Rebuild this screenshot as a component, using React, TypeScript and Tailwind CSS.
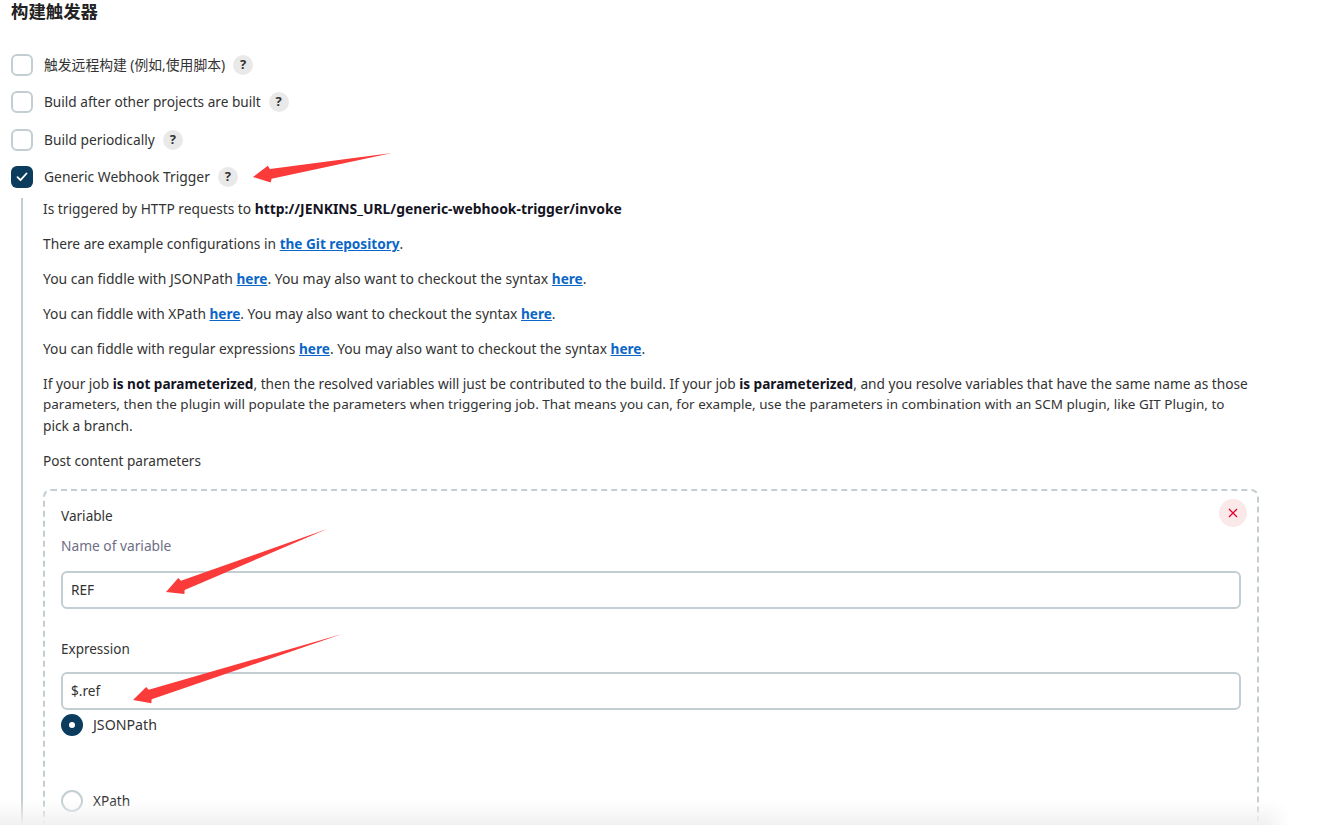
import React from "react";

const font = { fontFamily: '"Noto Sans", "Noto Sans CJK SC", sans-serif' };

function Help() {
  return (
    <span className="flex h-5 w-5 items-center justify-center rounded-full bg-[#e9e9e9] text-[13px] font-bold text-[#333]">?</span>
  );
}

function Box({ checked = false }: { checked?: boolean }) {
  return checked ? (
    <span className="flex h-[22px] w-[22px] items-center justify-center rounded-[6px] bg-[#0b3c5d]">
      <svg width="12" height="10" viewBox="0 0 12 10" fill="none">
        <path d="M1.5 5.2 4.5 8.2 10.5 1.5" stroke="#fff" strokeWidth="1.8" strokeLinecap="round" strokeLinejoin="round" />
      </svg>
    </span>
  ) : (
    <span className="block h-[22px] w-[22px] rounded-[6px] border-2 border-[#c3ced2] bg-white" />
  );
}

function Row({ label, checked, className = "", labelClass = "" }: { label: string; checked?: boolean; className?: string; labelClass?: string }) {
  return (
    <div className={`flex h-[22px] items-center ${className}`}>
      <Box checked={checked} />
      <span className={`ml-[11px] mr-[8px] leading-[22px] text-[#333] ${labelClass}`}>{label}</span>
      <Help />
    </div>
  );
}

function A({ children }: { children: React.ReactNode }) {
  return <a className="text-[13.6px] font-bold text-[#0b66c8] underline">{children}</a>;
}

function B({ children }: { children: React.ReactNode }) {
  return <b className="text-[13.6px] font-bold text-[#14141f]">{children}</b>;
}

function Arrow({ x1, y1, x2, y2 }: { x1: number; y1: number; x2: number; y2: number }) {
  // tapered arrow from a hair-thin tail (x1,y1) to the head tip (x2,y2)
  const dx = x2 - x1;
  const dy = y2 - y1;
  const len = Math.hypot(dx, dy);
  const ux = dx / len;
  const uy = dy / len;
  const nx = -uy;
  const ny = ux;
  const pt = (along: number, off: number) =>
    `${x2 - ux * along + nx * off},${y2 - uy * along + ny * off}`;
  const points = [
    `${x1},${y1}`,
    pt(18, -5),
    pt(16.5, -8.5),
    `${x2},${y2}`,
    pt(16.5, 8.5),
    pt(18, 5),
  ].join(" ");
  return <polygon points={points} fill="#fb3a3a" />;
}

function TextInput({ value }: { value: string }) {
  return (
    <div className="flex h-[38px] w-[1180px] items-center rounded-[6px] border-2 border-[#c3ced2] bg-white pb-[1px] pl-[8px] text-[13.6px] text-[#333]">
      {value}
    </div>
  );
}

export default function App() {
  return (
    <div className="relative h-[830px] w-[1321px] overflow-hidden bg-white" style={font}>
      <div className="px-[11px]">
        <h2 className="text-[17.4px] font-bold leading-[22px] text-[#222]">构建触发器</h2>
        <Row className="mt-[32px]" labelClass="text-[13.8px]" label="触发远程构建 (例如,使用脚本)" />
        <Row className="mt-[15px]" labelClass="text-[13.65px]" label="Build after other projects are built" />
        <Row className="mt-[16px]" labelClass="text-[13.75px]" label="Build periodically" />
        <Row className="mt-[15px]" labelClass="text-[13.85px]" label="Generic Webhook Trigger" checked />

        <div className="ml-[10px] mt-[11px] h-[700px] border-l-2 border-[#c3ced2] pl-[20px] text-[13.75px] leading-[21px] text-[#333]">
          <p className="-mt-[1px]">Is triggered by HTTP requests to <b className="text-[13.9px] font-bold text-[#14141f]">http://JENKINS_URL/generic-webhook-trigger/invoke</b></p>
          <p className="mt-[14px]">There are example configurations in <A>the Git repository</A>.</p>
          <p className="mt-[14px] text-[13.95px]">You can fiddle with JSONPath <A>here</A>. You may also want to checkout the syntax <A>here</A>.</p>
          <p className="mt-[14px]">You can fiddle with XPath <A>here</A>. You may also want to checkout the syntax <A>here</A>.</p>
          <p className="mt-[14px]">You can fiddle with regular expressions <A>here</A>. You may also want to checkout the syntax <A>here</A>.</p>
          <p className="mt-[14px] w-[1215px] whitespace-nowrap">
            <span className="block text-[13.7px]">If your job <B>is not parameterized</B>, then the resolved variables will just be contributed to the build. If your job <B>is parameterized</B>, and you resolve variables that have the same name as those</span>
            <span className="block text-[13.48px]">parameters, then the plugin will populate the parameters when triggering job. That means you can, for example, use the parameters in combination with an SCM plugin, like GIT Plugin, to</span>
            <span className="block">pick a branch.</span>
          </p>
          <p className="mt-[14px] text-[13.6px]">Post content parameters</p>

          <div className="relative mt-[18px] h-[420px] w-[1216px] rounded-[8px] border-2 border-dashed border-[#c3ced2] px-[16px] pt-[15px]">
            <button className="absolute right-[10px] top-[8px] flex h-7 w-7 items-center justify-center rounded-full bg-[#fbe9ea]">
              <svg width="10" height="10" viewBox="0 0 10 10" fill="none">
                <path d="M1 1 9 9M9 1 1 9" stroke="#e6002d" strokeWidth="1.3" />
              </svg>
            </button>
            <div className="text-[13.6px] leading-[20px]">Variable</div>
            <div className="mt-[10px] leading-[20px] text-[#6e6e85]">Name of variable</div>
            <div className="mt-[15px]"><TextInput value="REF" /></div>
            <div className="mt-[30px] text-[13.5px] leading-[20px]">Expression</div>
            <div className="mt-[13px]"><TextInput value="$.ref" /></div>
            <div className="mt-[4px] flex h-[22px] items-center">
              <span className="flex h-[22px] w-[22px] items-center justify-center rounded-full bg-[#0b3c5d]">
                <span className="block h-[6px] w-[6px] rounded-full bg-white" />
              </span>
              <span className="-mt-[2px] ml-[10px] text-[14.2px]">JSONPath</span>
            </div>
            <div className="mt-[54px] flex h-[22px] items-center">
              <span className="block h-[22px] w-[22px] rounded-full border-2 border-[#c3ced2] bg-white" />
              <span className="-mt-[2px] ml-[10px] text-[13.6px]">XPath</span>
            </div>
          </div>
        </div>
      </div>

      <svg className="pointer-events-none absolute left-0 top-0" width="1321" height="830">
        <Arrow x1={392} y1={153} x2={253} y2={177} />
        <Arrow x1={327} y1={529} x2={166} y2={592} />
        <Arrow x1={342} y1={634} x2={133} y2={700} />
      </svg>

      <div className="absolute bottom-[5px] left-0 h-[25px] w-[1290px] bg-gradient-to-b from-transparent to-[#f1f1f1]" />
      <div className="absolute bottom-[5px] left-[1265px] h-[25px] w-[25px] bg-gradient-to-r from-transparent to-white" />
      <div className="absolute bottom-0 left-0 h-[5px] w-full bg-white" />
    </div>
  );
}
